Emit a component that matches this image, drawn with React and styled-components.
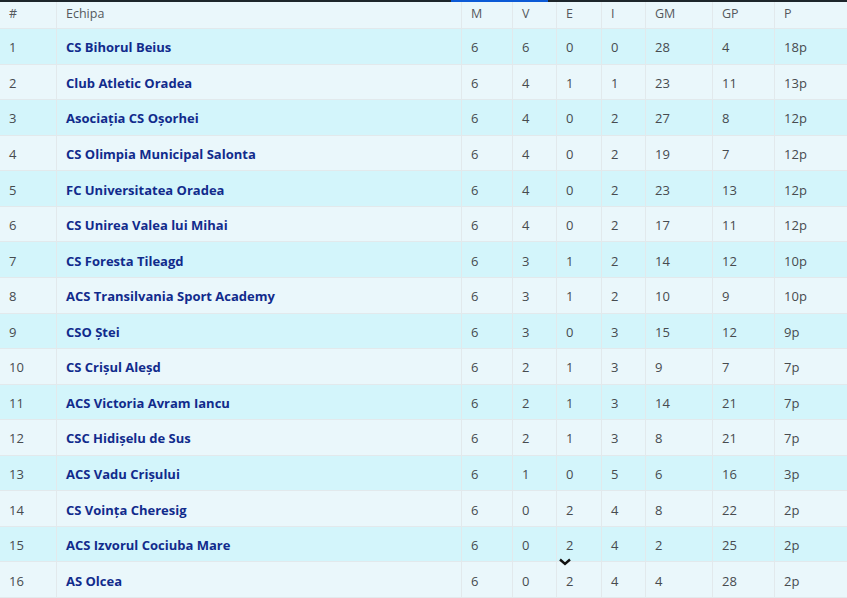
import React from 'react';
import styled, { createGlobalStyle } from 'styled-components';

const teams = [
    ['CS Bihorul Beius', 6, 6, 0, 0, 28, 4, 18],
    ['Club Atletic Oradea', 6, 4, 1, 1, 23, 11, 13],
    ['Asociația CS Oșorhei', 6, 4, 0, 2, 27, 8, 12],
    ['CS Olimpia Municipal Salonta', 6, 4, 0, 2, 19, 7, 12],
    ['FC Universitatea Oradea', 6, 4, 0, 2, 23, 13, 12],
    ['CS Unirea Valea lui Mihai', 6, 4, 0, 2, 17, 11, 12],
    ['CS Foresta Tileagd', 6, 3, 1, 2, 14, 12, 10],
    ['ACS Transilvania Sport Academy', 6, 3, 1, 2, 10, 9, 10],
    ['CSO Ștei', 6, 3, 0, 3, 15, 12, 9],
    ['CS Crișul Aleșd', 6, 2, 1, 3, 9, 7, 7],
    ['ACS Victoria Avram Iancu', 6, 2, 1, 3, 14, 21, 7],
    ['CSC Hidișelu de Sus', 6, 2, 1, 3, 8, 21, 7],
    ['ACS Vadu Crișului', 6, 1, 0, 5, 6, 16, 3],
    ['CS Voința Cheresig', 6, 0, 2, 4, 8, 22, 2],
    ['ACS Izvorul Cociuba Mare', 6, 0, 2, 4, 2, 25, 2],
    ['AS Olcea', 6, 0, 2, 4, 4, 28, 2],
];

const headers = ['#', 'Echipa', 'M', 'V', 'E', 'I', 'GM', 'GP', 'P'];

const App = () => {
    return (
        <>
            <GlobalStyle />
            <Page>
                <TopBar><TopBarActive /></TopBar>
                <Table>
                    <HeadRow>
                        {headers.map(h => <HeadCell key={h}>{h}</HeadCell>)}
                    </HeadRow>
                    {teams.map(([name, m, v, e, i, gm, gp, p], idx) => (
                        <Row key={name} striped={idx % 2 === 0}>
                            <Cell>{idx + 1}</Cell>
                            <TeamCell>{name}</TeamCell>
                            <Cell>{m}</Cell>
                            <Cell>{v}</Cell>
                            <Cell>{e}</Cell>
                            <Cell>{i}</Cell>
                            <Cell>{gm}</Cell>
                            <Cell>{gp}</Cell>
                            <Cell>{p}p</Cell>
                        </Row>
                    ))}
                </Table>
                <Chevron width="14" height="10" viewBox="0 0 14 10">
                    <path d="M2 2.5 L7 7 L12 2.5" fill="none" stroke="#111" strokeWidth="2.4" />
                </Chevron>
            </Page>
        </>
    );
};

const GlobalStyle = createGlobalStyle`
    html, body {
        margin: 0;
        padding: 0;
        background: #eaf7fb;
    }
    body {
        font-family: "Open Sans", "Liberation Sans", sans-serif;
    }
`;

const Page = styled.div`
    position: relative;
    width: 847px;
    height: 598px;
    display: flex;
    flex-direction: column;
    overflow: hidden;
`;

const TopBar = styled.div`
    height: 2px;
    background: #1d262b;
    flex: none;
`;

const TopBarActive = styled.div`
    margin-left: 451px;
    width: 97px;
    height: 2px;
    background: #0b5ad6;
`;

const Table = styled.div`
    flex: 1;
    display: grid;
    grid-template-rows: 27px repeat(16, 1fr);
`;

const rowColumns = `
    display: grid;
    grid-template-columns: 57px 405px 51px 44px 45px 44px 67px 62px 1fr;
    border-bottom: 1px solid #e2e9ec;
`;

const HeadRow = styled.div`
    ${rowColumns}
    background: #eaf7fb;
`;

const Row = styled.div`
    ${rowColumns}
    background: ${props => (props.striped ? '#d3f5fb' : '#eaf7fb')};
`;

const Cell = styled.div`
    display: flex;
    align-items: center;
    padding-left: 9px;
    padding-top: 2px;
    border-right: 1px solid #e2e9ec;
    font-size: 13px;
    color: #474b4f;

    &:last-child {
        border-right: none;
    }
`;

const HeadCell = styled(Cell)`
    font-size: 12.5px;
    color: #55595d;
    padding-top: 0;
    padding-bottom: 4px;
`;

const TeamCell = styled(Cell)`
    font-weight: 700;
    color: #112b8c;
`;

const Chevron = styled.svg`
    position: absolute;
    left: 558px;
    top: 557px;
`;

export default App;
